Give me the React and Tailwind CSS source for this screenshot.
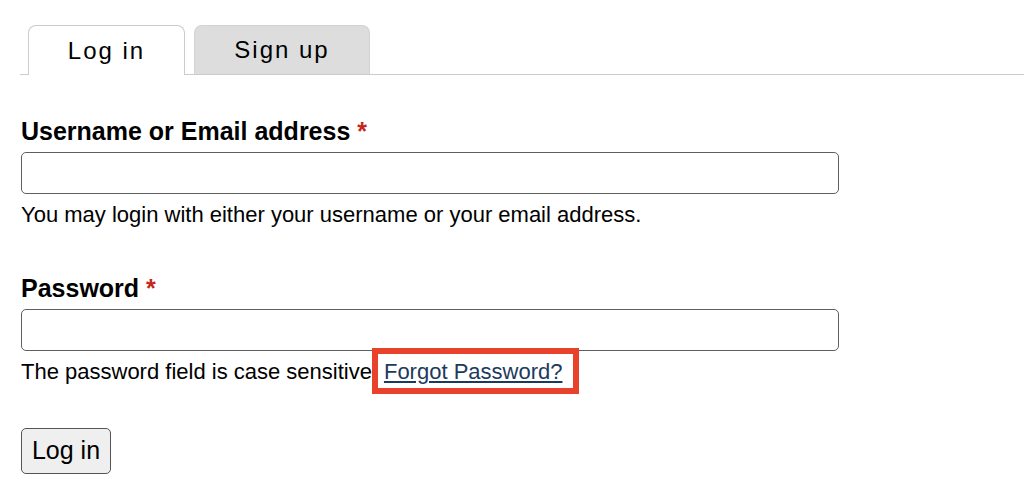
import React from 'react';

const font = { fontFamily: '"Liberation Sans", Arial, sans-serif' };

function Field({ label, hint }) {
  return (
    <div>
      <label className="block text-[25px] leading-[29px] font-bold text-black">
        {label} <span className="text-[#c4271b]">*</span>
      </label>
      <input
        type="text"
        className="mt-[6px] block w-[818px] h-[42px] rounded-[5px] border border-[#5f5f5f] bg-white outline-none"
      />
      <div className="mt-[8px] text-[22px] leading-[25px] text-black">{hint}</div>
    </div>
  );
}

export default function App() {
  return (
    <div className="w-[1024px] h-[488px] bg-white overflow-hidden" style={font}>
      <div className="pt-[25px] pl-[20px]">
        <div className="flex items-end border-b border-[#cccccc]">
          <div className="ml-[8px] -mb-px w-[157px] h-[50px] rounded-t-[8px] border border-b-0 border-[#cccccc] bg-white flex items-center justify-center text-[24px] tracking-[2px] text-black">
            Log in
          </div>
          <div className="ml-[9px] w-[176px] h-[49px] rounded-t-[8px] border border-b-0 border-[#d2d2d2] bg-[#dddddd] flex items-center justify-center text-[24px] tracking-[2px] text-black">
            Sign up
          </div>
        </div>
      </div>

      <div className="pl-[21px]">
        <div className="mt-[42px]">
          <Field
            label="Username or Email address"
            hint="You may login with either your username or your email address."
          />
        </div>

        <div className="mt-[47px]">
          <Field
            label="Password"
            hint={
              <span>
                The password field is case sensitive
                <span className="relative ml-[12px]">
                  <a href="#" className="text-[#1c3a5e] underline">Forgot Password?</a>
                  <span className="absolute -left-[12px] -right-[17px] -top-[11px] -bottom-[10px] border-[6px] border-[#e8412c] pointer-events-none" />
                </span>
              </span>
            }
          />
        </div>

        <button className="mt-[44px] w-[90px] h-[46px] rounded-[5px] border border-[#555555] bg-[#efefef] text-[25px] text-black">
          Log in
        </button>
      </div>
    </div>
  );
}
